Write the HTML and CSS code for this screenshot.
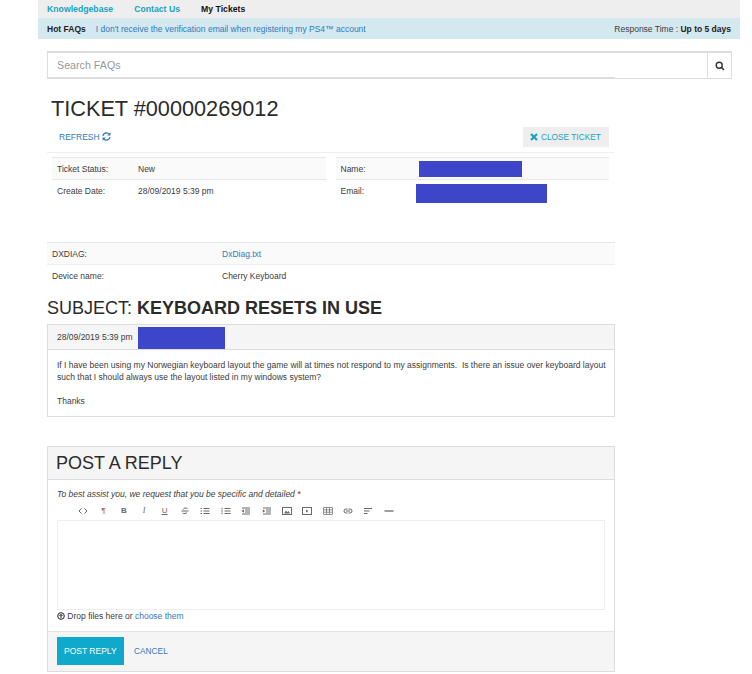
FILE: index.html
```html
<!DOCTYPE html>
<html lang="en">
<head>
  <meta charset="UTF-8">
  <title>Ticket #00000269012</title>
  <link rel="stylesheet" href="styles.css">
</head>
<body>
  <div class="page">
    <nav class="top-nav">
      <a class="nav-link">Knowledgebase</a>
      <a class="nav-link">Contact Us</a>
      <a class="nav-link active">My Tickets</a>
    </nav>
    <div class="faq-bar">
      <div><b>Hot FAQs</b><a class="faq-link">I don't receive the verification email when registering my PS4™ account</a></div>
      <div class="response">Response Time : <b>Up to 5 days</b></div>
    </div>

    <div class="content">
      <div class="search">
        <div class="search-input">Search FAQs</div>
        <div class="search-btn">
          <svg width="10" height="10" viewBox="0 0 10 10"><circle cx="4.2" cy="4.2" r="3" fill="none" stroke="#333" stroke-width="1.4"/><path d="M6.4 6.4L9 9" stroke="#333" stroke-width="1.6"/></svg>
        </div>
      </div>
      <div class="search-line"></div>

      <h1 class="ticket-title">TICKET #00000269012</h1>
      <div class="actions">
        <a class="refresh">REFRESH
          <svg width="9" height="9" viewBox="0 0 10 10"><path d="M1 4.2A4 4 0 0 1 8 2.4M9 5.8A4 4 0 0 1 2 7.6" fill="none" stroke="#337ab7" stroke-width="1.5"/><path d="M9.4 0.4V4H5.8zM0.6 9.6V6H4.2z" fill="#337ab7"/></svg>
        </a>
        <a class="close-btn">
          <svg width="8" height="8" viewBox="0 0 8 8"><path d="M1 1L7 7M7 1L1 7" stroke="#17a2c0" stroke-width="2.2"/></svg>
          CLOSE TICKET
        </a>
      </div>

      <div class="info">
        <div class="info-col">
          <div class="info-row shaded"><span class="key">Ticket Status:</span><span>New</span></div>
          <div class="info-row"><span class="key">Create Date:</span><span>28/09/2019 5:39 pm</span></div>
        </div>
        <div class="info-col">
          <div class="info-row shaded"><span class="key key-name">Name:</span><span class="redact redact-name"></span></div>
          <div class="info-row"><span class="key key-email">Email:</span><span class="redact redact-email"></span></div>
        </div>
      </div>

      <div class="extra">
        <div class="extra-row shaded"><span class="extra-key">DXDIAG:</span><a class="link">DxDiag.txt</a></div>
        <div class="extra-row device"><span class="extra-key">Device name:</span><span>Cherry Keyboard</span></div>
      </div>

      <h2 class="subject">SUBJECT: <b>KEYBOARD RESETS IN USE</b></h2>
      <div class="message">
        <div class="message-head"><span>28/09/2019 5:39 pm</span><span class="redact redact-author"></span></div>
        <div class="message-body">
          <p>If I have been using my Norwegian keyboard layout the game will at times not respond to my assignments.&nbsp; Is there an issue over keyboard layout such that I should always use the layout listed in my windows system?</p>
          <p>Thanks</p>
        </div>
      </div>

      <div class="reply">
        <div class="reply-head">POST A REPLY</div>
        <div class="reply-body">
          <div class="hint">To best assist you, we request that you be specific and detailed <span class="req">*</span></div>
          <div class="toolbar">
            <svg class="tool" viewBox="0 0 10 10"><path d="M3.5 2.5L1 5l2.5 2.5M6.5 2.5L9 5 6.5 7.5" fill="none" stroke="#444" stroke-width="1"/></svg>
            <span class="tool tool-text">¶</span>
            <span class="tool tool-text tool-b">B</span>
            <span class="tool tool-text tool-i">I</span>
            <span class="tool tool-text tool-u">U</span>
            <svg class="tool" viewBox="0 0 10 10"><path d="M7.5 2.5A2.8 2 0 0 0 3 3.5M2.5 7A2.8 2 0 0 0 7 6.5M1.5 5H8.5" fill="none" stroke="#444" stroke-width="1"/></svg>
            <svg class="tool" viewBox="0 0 10 10"><path d="M3.5 2.5H9.5M3.5 5H9.5M3.5 7.5H9.5" stroke="#444" stroke-width="1"/><path d="M.5 2.5H2M.5 5H2M.5 7.5H2" stroke="#444" stroke-width="1.2"/></svg>
            <svg class="tool" viewBox="0 0 10 10"><path d="M3.5 2.5H9.5M3.5 5H9.5M3.5 7.5H9.5" stroke="#444" stroke-width="1"/><path d="M1 1.8V3.4M1 4.2V5.8M1 6.6V8.2" stroke="#444" stroke-width="1"/></svg>
            <svg class="tool" viewBox="0 0 10 10"><path d="M1 2H9M4 4H9M4 6H9M1 8H9" stroke="#444" stroke-width="1"/><path d="M3 3.2V6.8L.6 5z" fill="#444"/></svg>
            <svg class="tool" viewBox="0 0 10 10"><path d="M1 2H9M4 4H9M4 6H9M1 8H9" stroke="#444" stroke-width="1"/><path d="M.8 3.2V6.8L3.2 5z" fill="#444"/></svg>
            <svg class="tool" viewBox="0 0 10 10"><rect x=".5" y="1.5" width="9" height="7" fill="none" stroke="#444"/><path d="M2 7.5L4 4.5 5.5 6.2 6.6 5 8 7.5z" fill="#444"/></svg>
            <svg class="tool" viewBox="0 0 10 10"><rect x=".5" y="1.5" width="9" height="7" fill="none" stroke="#444"/><path d="M4 3.500V6.500L6.400 5z" fill="#444"/></svg>
            <svg class="tool" viewBox="0 0 10 10"><path d="M.5 1.500H9.500V8.500H.5zM.5 3.800H9.500M.5 6.200H9.500M3.500 1.500V8.500M6.500 1.500V8.500" fill="none" stroke="#555" stroke-width=".8"/></svg>
            <svg class="tool" viewBox="0 0 10 10"><path d="M4.500 3H3a2 2 0 0 0 0 4H4.500M5.500 3H7a2 2 0 0 1 0 4H5.500M3 5H7" fill="none" stroke="#444" stroke-width="1"/></svg>
            <svg class="tool" viewBox="0 0 10 10"><path d="M1 2.500H9M1 5H6.500M1 7.500H4.500" stroke="#444" stroke-width="1.200"/></svg>
            <svg class="tool" viewBox="0 0 10 10"><path d="M.5 5H9.500" stroke="#444" stroke-width="1.300"/></svg>
          </div>
          <div class="editor"></div>
          <div class="drop">
            <svg width="8" height="8" viewBox="0 0 8 8"><circle cx="4" cy="4" r="3.300" fill="none" stroke="#222" stroke-width="1"/><path d="M4 6V2.400M2.400 4L4 2.400 5.600 4" fill="none" stroke="#222" stroke-width="1"/></svg>
            Drop files here or <a class="link">choose them</a>
          </div>
        </div>
        <div class="reply-foot">
          <a class="post-btn">POST REPLY</a>
          <a class="cancel">CANCEL</a>
        </div>
      </div>
    </div>
  </div>
</body>
</html>
```
FILE: styles.css
```css
body {
  margin: 0;
  font-family: 'Liberation Sans', Arial, sans-serif;
  font-size: 8.5px;
  color: #3c3c3c;
  background: #fff;
}
p { margin: 0; }
a { text-decoration: none; }
.page {
  width: 702px;
  margin-left: 38px;
}
.top-nav {
  display: flex;
  gap: 21px;
  height: 18px;
  padding-left: 9px;
  align-items: center;
  background: #eee;
  font-size: 8.7px;
  font-weight: bold;
}
.nav-link { color: #17a2c0; }
.nav-link.active { color: #111; }
.faq-bar {
  display: flex;
  justify-content: space-between;
  align-items: center;
  height: 21px;
  padding: 0 9px;
  background: #d4e8ef;
}
.faq-bar b { color: #222; }
.faq-link {
  margin-left: 10px;
  color: #337ab7;
}
.content { margin-left: 9px; }
.search {
  display: flex;
  width: 685px;
  height: 28px;
  margin-top: 12px;
  box-sizing: border-box;
  border: 1px solid #ddd;
  border-top-width: 2px;
}
.search-input {
  flex: 1;
  padding-left: 9px;
  line-height: 25px;
  font-size: 10.7px;
  color: #999;
}
.search-btn {
  display: flex;
  width: 23px;
  align-items: center;
  justify-content: center;
  border-left: 1px solid #ddd;
}
.search-line {
  width: 568px;
  height: 2px;
  margin-top: -2px;
  background: #ddd;
}
.ticket-title {
  margin: 18px 0 0 4px;
  font-size: 21.7px;
  line-height: 24px;
  font-weight: normal;
  color: #2b2b2b;
}
.actions {
  display: flex;
  justify-content: space-between;
  align-items: center;
  height: 21px;
  width: 550px;
  margin-top: 5px;
  padding: 0 5px 5px 12px;
  border-bottom: 1px solid #eee;
}
.refresh { color: #337ab7; }
.refresh svg { vertical-align: -1px; }
.close-btn {
  display: flex;
  align-items: center;
  gap: 3px;
  height: 20px;
  width: 72px;
  padding: 0 7px;
  font-size: 8.3px;
  background: #eee;
  color: #17a2c0;
}
.info {
  display: flex;
  gap: 10px;
  width: 557px;
  height: 85px;
  margin: 4px 0 0 5px;
}
.info-col { flex: 1; }
.info-row {
  display: flex;
  height: 21px;
  padding-left: 5px;
  align-items: center;
  box-sizing: border-box;
}
.info-row.shaded {
  height: 23px;
  background: #fafafa;
  border-top: 1px solid #e8e8e8;
  border-bottom: 1px solid #e8e8e8;
}
.key { width: 81px; }
.key-name { width: 78px; }
.key-email { width: 75px; }
.redact {
  display: block;
  background: #3d45c9;
}
.redact-name { width: 103px; height: 16px; }
.redact-email { width: 131px; height: 19px; margin-top: 6px; }
.redact-author { width: 87px; height: 22px; margin: 2px 0 0 5px; }
.extra { width: 568px; }
.extra-row {
  display: flex;
  height: 23px;
  padding-left: 5px;
  align-items: center;
  box-sizing: border-box;
}
.extra-row.device { height: 21px; }
.extra-row.shaded {
  background: #fafafa;
  border-top: 1px solid #e8e8e8;
  border-bottom: 1px solid #eee;
}
.extra-key { width: 170px; }
.link { color: #337ab7; }
.subject {
  margin: 11px 0 5px;
  font-size: 18px;
  line-height: 22px;
  font-weight: normal;
  color: #2b2b2b;
}
.message {
  width: 568px;
  box-sizing: border-box;
  border: 1px solid #ddd;
}
.message-head {
  display: flex;
  align-items: center;
  height: 24px;
  padding-left: 9px;
  background: #f5f5f5;
  border-bottom: 1px solid #ddd;
}
.message-body {
  padding: 9px 5px 9px 9px;
  line-height: 12px;
}
.message-body p + p { margin-top: 12px; }
.reply {
  width: 568px;
  margin-top: 29px;
  box-sizing: border-box;
  border: 1px solid #ddd;
}
.reply-head {
  height: 32px;
  padding-left: 8px;
  line-height: 32px;
  font-size: 18px;
  color: #2b2b2b;
  background: #f5f5f5;
  border-bottom: 1px solid #ddd;
}
.reply-body { padding: 9px 9px 9px; }
.hint { font-style: italic; }
.req { color: #c00; }
.toolbar {
  display: flex;
  gap: 10.4px;
  height: 19px;
  margin-top: 2px;
  padding-left: 21px;
  align-items: center;
}
.tool {
  width: 10px;
  height: 10px;
  flex: none;
  opacity: .8;
}
.tool-text {
  line-height: 10px;
  text-align: center;
  font-size: 8px;
  color: #444;
}
.tool-b { font-weight: bold; }
.tool-i { font-style: italic; font-family: 'Liberation Serif', serif; }
.tool-u { text-decoration: underline; }
.editor {
  height: 88px;
  border: 1px solid #eee;
}
.drop { margin-top: 1px; line-height: 11px; }
.drop svg { vertical-align: -1px; }
.reply-foot {
  display: flex;
  align-items: center;
  gap: 10px;
  height: 38px;
  padding: 0 0 1px 8.5px;
  background: #f5f5f5;
  border-top: 1px solid #e4e4e4;
}
.post-btn {
  display: block;
  padding: 0 7.5px;
  line-height: 28px;
  background: #0fa9cb;
  color: #fff;
}
.cancel { color: #337ab7; font-size: 8.3px; }
```
